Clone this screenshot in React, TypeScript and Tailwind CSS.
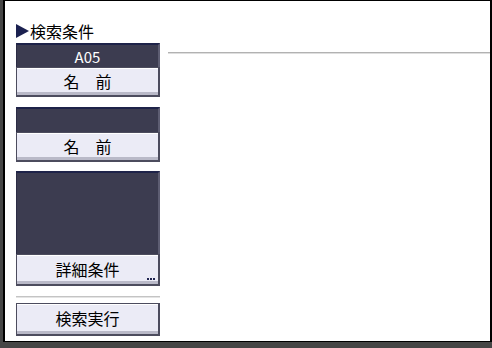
import React from 'react';

const font = { fontFamily: '"Noto Sans CJK JP", "Noto Sans", sans-serif' };

function LightButton({ label, dots = false, className = '' }: { label: string; dots?: boolean; className?: string }) {
  return (
    <div
      className={`relative flex items-center justify-center bg-[#ebebf6] border border-[#4c4c5e] border-r-2 border-b-2 shadow-[inset_0_1px_0_#ffffff,inset_0_-3px_0_#b9b9c8] text-[16px] leading-none text-black ${className}`}
    >
      <span className="-mt-[2px]">{label}</span>
      {dots && (
        <div className="absolute right-[3px] bottom-[4px] flex gap-[1px]">
          <span className="w-[2px] h-[2px] bg-[#1f2450]"></span>
          <span className="w-[2px] h-[2px] bg-[#1f2450]"></span>
          <span className="w-[2px] h-[2px] bg-[#1f2450]"></span>
        </div>
      )}
    </div>
  );
}

function DarkBox({ children, className = '' }: { children?: React.ReactNode; className?: string }) {
  return (
    <div
      className={`flex items-center justify-center bg-[#3c3c50] border-t-2 border-t-[#1e2349] border-l border-l-[#2b2b44] border-r-2 border-r-[#5d5d72] text-white text-[15px] leading-none ${className}`}
    >
      {children}
    </div>
  );
}

export default function App() {
  return (
    <div className="w-[492px] h-[348px] bg-[#464646] overflow-hidden" style={font}>
      <div className="ml-[3px] w-[489px] h-[342px] bg-white border-l-2 border-t border-r-2 border-b border-black flex">
        {/* left column */}
        <div className="ml-[11px] w-[144px] flex flex-col">
          <div className="mt-[20px] h-[20px] flex items-center text-[16px] leading-none text-black">
            <svg width="13" height="14" viewBox="0 0 13 14" className="mr-[1px]">
              <polygon points="0,0 13,7 0,14" fill="#1b2150" />
            </svg>
            <span>検索条件</span>
          </div>

          <DarkBox className="mt-[2px] h-[24px]">A05</DarkBox>
          <LightButton label="名　前" className="h-[30px]" />

          <DarkBox className="mt-[10px] h-[25px]" />
          <LightButton label="名　前" className="h-[30px]" />

          <DarkBox className="mt-[9px] h-[83px]" />
          <LightButton label="詳細条件" dots className="h-[32px]" />

          <div className="mt-[10px] h-[2px] bg-[#c4c4c4] border-b border-[#e4e4e4]"></div>

          <LightButton label="検索実行" className="mt-[5px] h-[33px]" />
        </div>

        {/* right area */}
        <div className="flex-1 ml-[8px] pt-[51px]">
          <div className="h-[2px] bg-[#b2b2b2] border-b border-[#dedede]"></div>
        </div>
      </div>
    </div>
  );
}
